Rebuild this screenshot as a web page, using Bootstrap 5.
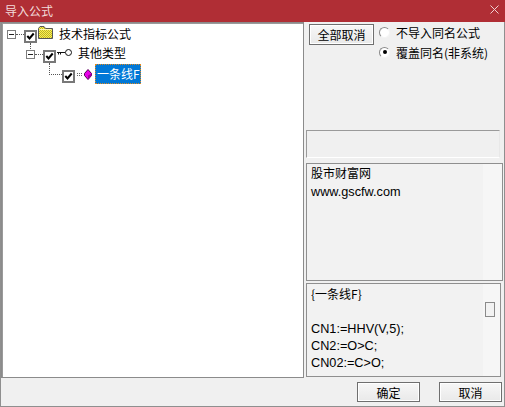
<!DOCTYPE html>
<html lang="zh"><head><meta charset="utf-8">
<link href="https://cdn.jsdelivr.net/npm/bootstrap@5.3.0/dist/css/bootstrap.min.css" rel="stylesheet">
<style>
html,body{margin:0;width:505px;height:407px;overflow:hidden;background:#f0f0f0}
body{font:12px/17px "Noto Sans CJK SC","Liberation Sans",sans-serif;color:#000}
.dlg{width:505px;height:407px;border:1px solid #8f8f8f;border-top:0;background:#f0f0f0}
.ttl{height:22px;flex:none;background:#b02e35;color:#f2dcdc;margin:0 -1px;padding:0 6px 0 5px;line-height:21px;font-size:12px}
.ttl svg{margin-top:5px}
.main{height:356px;flex:none}
.tree{width:303px;flex:none;border:1px solid #8b8b8b;background:#fff;padding:3px 0 0 5px;box-shadow:inset 1px 1px 0 #9a9a9a}
.rw{height:20px;white-space:nowrap;align-items:flex-start}
.ind1{margin-left:19px}.ind2{margin-left:42px}
.exp{width:9px;height:9px;margin-top:4px;border:1px solid #7d7d7d;position:relative;flex:none;background:#fff}
.exp::after{content:"";position:absolute;left:1px;right:1px;top:3px;height:1px;background:#222}
.dots{border-top:1px dotted #555;width:8px;flex:none;margin-top:8px}
.dots-l{width:13px}
.chk{width:13px;height:13px;margin-top:4px;border:2px solid #787878;background:#fff;flex:none;display:flex;position:relative}
.chk svg{display:block}
.kid::after{content:"";position:absolute;left:4px;top:11px;height:8px;border-left:1px dotted #555}
.kid2::after{height:12px}
.ico-f{margin:0 0 0 1px;flex:none}
.ico-k{margin:3px 0 0 1px;flex:none}
.ico-g{margin:3px 0 0 2px;flex:none}
.lbl{font-size:12px;margin:-1px 0 0 6px}
.ind1 .lbl{margin-top:-2px}
.sel{background:#0078d7;color:#fff;outline:1px dotted #e08a20;outline-offset:-1px;padding:0 2px;height:20px;line-height:20px;margin:-2px 0 0 3px;width:46px}
.side{width:200px;padding-left:2px}
.tools{height:108px;flex:none;padding:2px 0 0 3px}
.wbtn{background:linear-gradient(#f7f7f7,#e9e9e9);border:1px solid #6f6f6f;border-radius:0;font-size:12px;line-height:17px;padding:0;color:#000;box-shadow:inset 0 0 0 1px #fff}
.wbtn-a{width:65px;height:21px}
.wbtn-b{width:63px;height:20px}
.radios{margin:-2px 0 0 5px}
.rd{height:20px}
.dot{width:11px;height:11px;border-radius:50%;background:#fff;border:1px solid;border-color:#8a8a8a #f4f4f4 #f4f4f4 #8a8a8a;margin-right:6px;flex:none;display:flex;align-items:center;justify-content:center}
.dot i{width:4px;height:4px;background:#000;border-radius:50%;display:block}
.blank{height:28px;width:194px;flex:none;border:1px solid #9a9a9a;border-right-color:#e8e8e8;border-bottom-color:#fff}
.memo{flex:none;border:1px solid #8f8f8f;padding:1px 4px;font-size:12px;position:relative;line-height:17px;background:linear-gradient(to right,#f2f2f2 176px,#f6f6f6 176px)}
.m1{height:118px;width:197px;margin-top:5px;line-height:18px;padding-top:0}
.m2{height:94px;width:195px;margin-top:2px}
.lat{font-family:"Liberation Sans",sans-serif;font-size:12.7px;line-height:1}
.thumb{position:absolute;right:5px;top:18px;width:10px;height:15px;border:1px solid #8a8a8a;background:#f2f2f2}
.foot{height:28px;flex:none;padding:4px 2px 0 0;gap:19px}
</style></head><body>
<div class="dlg d-flex flex-column">
  <div class="ttl d-flex justify-content-between">
    <span>导入公式</span>
    <svg width="9" height="9" viewBox="0 0 9 9"><path d="M.5.500l8 8M8.500.500l-8 8" stroke="#f0d0d0" fill="none"/></svg>
  </div>
  <div class="main d-flex">
    <div class="tree">
      <div class="rw d-flex">
        <span class="exp"></span><span class="dots"></span>
        <span class="chk kid"><svg width="9" height="9" viewBox="0 0 9 9"><path d="M1.300 4l2.200 2.400L7.700 1.500" stroke="#000" stroke-width="2" fill="none"/></svg></span>
        <svg class="ico-f" width="15" height="13" viewBox="0 0 15 13"><defs><pattern id="dz" width="2" height="2" patternUnits="userSpaceOnUse"><rect width="2" height="2" fill="#fff24a"/><rect width="1" height="1" fill="#b8b030"/><rect x="1" y="1" width="1" height="1" fill="#b8b030"/></pattern></defs><path d="M.5 12.500v-10l1.500-2h4l1.500 2h7v10z" fill="url(#dz)" stroke="#555"/><path d="M1.500 3.500h12" stroke="#fff8b0"/></svg>
        <span class="lbl">技术指标公式</span>
      </div>
      <div class="rw d-flex ind1">
        <span class="exp"></span><span class="dots"></span>
        <span class="chk kid kid2"><svg width="9" height="9" viewBox="0 0 9 9"><path d="M1.300 4l2.200 2.400L7.700 1.500" stroke="#000" stroke-width="2" fill="none"/></svg></span>
        <svg class="ico-k" width="15" height="8" viewBox="0 0 15 8"><path d="M0 3.500h8M1.500 3.500v2M3.500 3.500v2" stroke="#111" fill="none"/><circle cx="11.500" cy="3.500" r="3" fill="#fff" stroke="#111"/></svg>
        <span class="lbl">其他类型</span>
      </div>
      <div class="rw d-flex ind2">
        <span class="dots dots-l"></span>
        <span class="chk"><svg width="9" height="9" viewBox="0 0 9 9"><path d="M1.300 4l2.200 2.400L7.700 1.500" stroke="#000" stroke-width="2" fill="none"/></svg></span>
        <svg class="ico-g" width="15" height="11" viewBox="0 0 15 11"><path d="M0 4.500h6M0 6.500h6" stroke="#666" stroke-dasharray="1 1"/><path d="M11 .5l3.500 4v2l-3.500 4-3.500-4v-2z" fill="#e800e8" stroke="#500050"/><path d="M11 6.500v4l3.500-4v-2z" fill="#a000a0"/></svg>
        <span class="sel">一条线F</span>
      </div>
    </div>
    <div class="side d-flex flex-column">
      <div class="tools d-flex">
        <button class="wbtn wbtn-a" type="button">全部取消</button>
        <div class="radios">
          <div class="rd d-flex align-items-center"><span class="dot"></span>不导入同名公式</div>
          <div class="rd d-flex align-items-center"><span class="dot"><i></i></span>覆盖同名(非系统)</div>
        </div>
      </div>
      <div class="blank"></div>
      <div class="memo m1">股市财富网<br><span class="lat">www.gscfw.com</span></div>
      <div class="memo m2">{一条线F}<br><br><span class="lat">CN1:=HHV(V,5);</span><br><span class="lat">CN2:=O&gt;C;</span><br><span class="lat">CN02:=C&gt;O;</span><span class="thumb"></span></div>
    </div>
  </div>
  <div class="foot d-flex justify-content-end">
    <button class="wbtn wbtn-b" type="button">确定</button>
    <button class="wbtn wbtn-b" type="button">取消</button>
  </div>
</div>
<script src="https://cdn.jsdelivr.net/npm/bootstrap@5.3.0/dist/js/bootstrap.bundle.min.js"></script>
</body></html>
